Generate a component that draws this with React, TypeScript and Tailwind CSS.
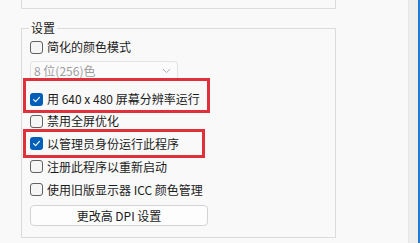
import React from "react";

const font = { fontFamily: '"Noto Sans CJK SC", "Noto Sans", sans-serif' };

function Box({ checked }: { checked?: boolean }) {
  if (checked) {
    return (
      <span className="flex h-[13px] w-[13px] shrink-0 items-center justify-center rounded-[3px] bg-[#005fb8]">
        <svg width="9" height="9" viewBox="0 0 10 10" fill="none">
          <path d="M1.8 5.2 L4 7.3 L8.3 2.7" stroke="white" strokeWidth="1.3" strokeLinecap="round" strokeLinejoin="round" />
        </svg>
      </span>
    );
  }
  return <span className="h-[13px] w-[13px] shrink-0 rounded-[3px] border border-[#616161] bg-[#f5f5f5]" />;
}

function Row({ label, checked, h }: { label: string; checked?: boolean; h: string }) {
  return (
    <div className={`flex items-center gap-[4px] ${h}`}>
      <Box checked={checked} />
      <span className="text-[12px] leading-none text-[#1b1b1b]">{label}</span>
    </div>
  );
}

export default function App() {
  return (
    <div className="flex h-[243px] w-[420px] overflow-hidden bg-[#f9f9f9]" style={font}>
      <div className="flex w-[408px] flex-col pl-[21px]">
        <div className="h-[9px] w-[315px] border-x border-b border-[#dcdcdc]" />

        <div className="relative mt-[19px] h-[210px] w-[315px] border border-[#dcdcdc] pl-[8px] pt-[7px]">
          <span className="absolute left-[7px] top-[-9px] bg-[#f9f9f9] px-[2px] text-[12px] leading-[16px] text-[#1b1b1b]">
            设置
          </span>

          <Row label="简化的颜色模式" h="h-[22px]" />

          <div className="mt-[3px] flex h-[20px] w-[148px] items-center justify-between rounded-[4px] border border-[#e3e3e3] bg-[#fbfbfb] pl-[3px] pr-[6px]">
            <span className="text-[12px] leading-none text-[#9d9d9d]">8 位(256)色</span>
            <svg width="9" height="6" viewBox="0 0 9 6" fill="none">
              <path d="M1 1.2 L4.5 4.6 L8 1.2" stroke="#b0b0b0" strokeWidth="1" />
            </svg>
          </div>

          <div className="mt-[7px]">
            <Row label="用 640 x 480 屏幕分辨率运行" checked h="h-[22px]" />
            <Row label="禁用全屏优化" h="h-[22px]" />
            <Row label="以管理员身份运行此程序" checked h="h-[23px]" />
            <Row label="注册此程序以重新启动" h="h-[23px]" />
            <Row label="使用旧版显示器 ICC 颜色管理" h="h-[23px]" />
          </div>

          <button className="mt-[4px] flex h-[21px] w-[178px] items-center justify-center rounded-[4px] border border-[#d3d3d3] bg-[#fdfdfd] text-[12px] leading-none text-[#1b1b1b]">
            更改高 DPI 设置
          </button>

          <div className="absolute left-[1px] top-[49px] h-[35px] w-[187px] border-[3px] border-[#e0313b]" />
          <div className="absolute left-[1px] top-[100px] h-[29px] w-[182px] border-[3px] border-[#e0313b]" />
        </div>
      </div>
      <div className="w-[10px] border-l border-[#e6e6e6] bg-[#eeeeee]" />
      <div className="w-[2px] bg-[#1f78d1]" />
    </div>
  );
}
